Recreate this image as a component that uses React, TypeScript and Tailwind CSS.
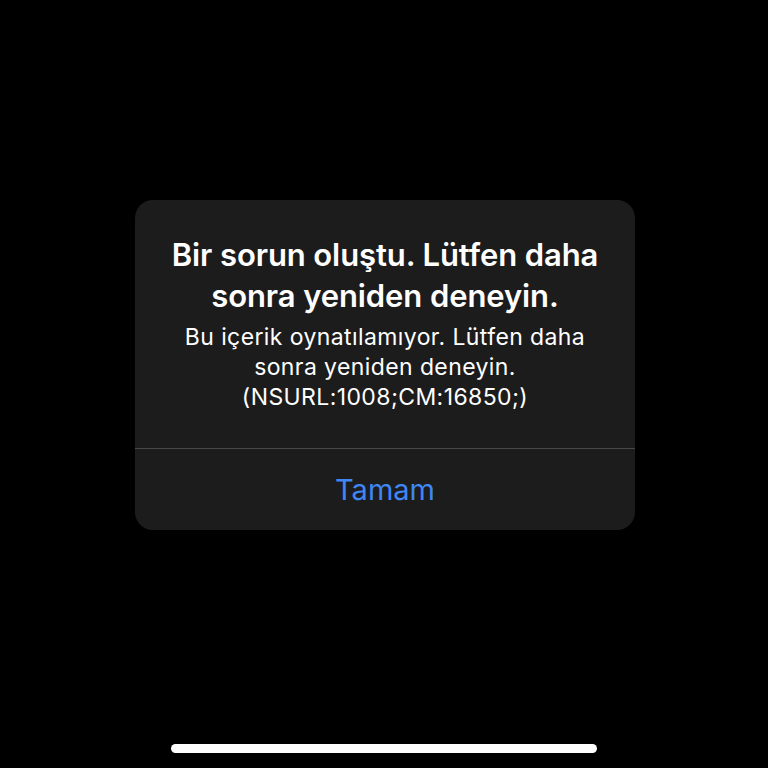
import React from "react";

export default function App() {
  return (
    <div
      className="w-[768px] h-[768px] bg-black flex flex-col items-center overflow-hidden"
      style={{ fontFamily: "Inter, 'Noto Sans', sans-serif" }}
    >
      <div className="mt-[200px] ml-[2px] w-[500px] rounded-[18px] bg-[#1c1c1d] flex flex-col">
        <div className="pt-[34px] pb-[36px] px-[20px] flex flex-col items-center text-center text-white">
          <div className="text-[31px] leading-[41px] font-semibold tracking-[-0.1px]">
            Bir sorun oluştu. Lütfen daha
            <br />
            sonra yeniden deneyin.
          </div>
          <div className="mt-[6px] text-[23px] leading-[30px] font-normal tracking-[0.4px]">
            Bu içerik oynatılamıyor. Lütfen daha
            <br />
            sonra yeniden deneyin.
            <br />
            (NSURL:1008;CM:16850;)
          </div>
        </div>
        <div className="h-px bg-[#48484a]" />
        <div className="h-[81px] flex items-center justify-center text-[29px] text-[#3f87f5] font-normal">
          Tamam
        </div>
      </div>
      <div className="flex-1" />
      <div className="mb-[15px] w-[426px] h-[9px] rounded-full bg-white" />
    </div>
  );
}
